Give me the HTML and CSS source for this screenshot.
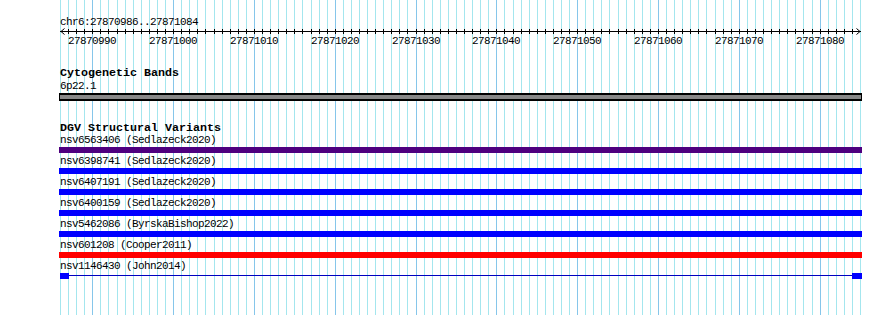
FILE: index.html
```html
<!DOCTYPE html>
<html lang="en">
<head>
<meta charset="utf-8">
<title>Genome browser</title>
<link rel="stylesheet" href="styles.css">
</head>
<body>
<svg class="grid" width="890" height="315" viewBox="0 0 890 315" aria-hidden="true">
  <path class="grid-minor" d="M60.5 0v315M68.5 0v315M76.5 0v315M84.5 0v315M100.5 0v315M108.5 0v315M117.5 0v315M125.5 0v315M133.5 0v315M141.5 0v315M149.5 0v315M157.5 0v315M165.5 0v315M181.5 0v315M189.5 0v315M197.5 0v315M205.5 0v315M214.5 0v315M222.5 0v315M230.5 0v315M238.5 0v315M246.5 0v315M262.5 0v315M270.5 0v315M278.5 0v315M286.5 0v315M294.5 0v315M302.5 0v315M311.5 0v315M319.5 0v315M327.5 0v315M343.5 0v315M351.5 0v315M359.5 0v315M367.5 0v315M375.5 0v315M383.5 0v315M391.5 0v315M399.5 0v315M407.5 0v315M424.5 0v315M432.5 0v315M440.5 0v315M448.5 0v315M456.5 0v315M464.5 0v315M472.5 0v315M480.5 0v315M488.5 0v315M504.5 0v315M513.5 0v315M521.5 0v315M529.5 0v315M537.5 0v315M545.5 0v315M553.5 0v315M561.5 0v315M569.5 0v315M585.5 0v315M593.5 0v315M601.5 0v315M609.5 0v315M618.5 0v315M626.5 0v315M634.5 0v315M642.5 0v315M650.5 0v315M666.5 0v315M674.5 0v315M682.5 0v315M690.5 0v315M698.5 0v315M706.5 0v315M715.5 0v315M723.5 0v315M731.5 0v315M747.5 0v315M755.5 0v315M763.5 0v315M771.5 0v315M779.5 0v315M787.5 0v315M795.5 0v315M803.5 0v315M812.5 0v315M828.5 0v315M836.5 0v315M844.5 0v315M852.5 0v315M860.5 0v315"/>
  <path class="grid-major" d="M92.5 0v315M173.5 0v315M254.5 0v315M335.5 0v315M416.5 0v315M496.5 0v315M577.5 0v315M658.5 0v315M739.5 0v315M820.5 0v315"/>
</svg>

<main class="browser">
  <div class="position">chr6:27870986..27871084</div>

  <svg class="ruler" width="803" height="19" viewBox="59 0 803 19">
    <path class="ruler-line" d="M60 3.5H861"/>
    <path class="ruler-line" d="M64.5 0.5L61 3.5L64.5 6.5M856.5 0.5L860 3.5L856.5 6.5"/>
    <path class="ruler-ticks" d="M68.5 1v5M76.5 1v5M84.5 1v5M92.5 1v5M100.5 1v5M108.5 1v5M117.5 1v5M125.5 1v5M133.5 1v5M141.5 1v5M149.5 1v5M157.5 1v5M165.5 1v5M173.5 1v5M181.5 1v5M189.5 1v5M197.5 1v5M205.5 1v5M214.5 1v5M222.5 1v5M230.5 1v5M238.5 1v5M246.5 1v5M254.5 1v5M262.5 1v5M270.5 1v5M278.5 1v5M286.5 1v5M294.5 1v5M302.5 1v5M311.5 1v5M319.5 1v5M327.5 1v5M335.5 1v5M343.5 1v5M351.5 1v5M359.5 1v5M367.5 1v5M375.5 1v5M383.5 1v5M391.5 1v5M399.5 1v5M407.5 1v5M416.5 1v5M424.5 1v5M432.5 1v5M440.5 1v5M448.5 1v5M456.5 1v5M464.5 1v5M472.5 1v5M480.5 1v5M488.5 1v5M496.5 1v5M504.5 1v5M513.5 1v5M521.5 1v5M529.5 1v5M537.5 1v5M545.5 1v5M553.5 1v5M561.5 1v5M569.5 1v5M577.5 1v5M585.5 1v5M593.5 1v5M601.5 1v5M609.5 1v5M618.5 1v5M626.5 1v5M634.5 1v5M642.5 1v5M650.5 1v5M658.5 1v5M666.5 1v5M674.5 1v5M682.5 1v5M690.5 1v5M698.5 1v5M706.5 1v5M715.5 1v5M723.5 1v5M731.5 1v5M739.5 1v5M747.5 1v5M755.5 1v5M763.5 1v5M771.5 1v5M779.5 1v5M787.5 1v5M795.5 1v5M803.5 1v5M812.5 1v5M820.5 1v5M828.5 1v5M836.5 1v5M844.5 1v5M852.5 1v5"/>
    <g class="ruler-labels">
      <text x="92" y="16">27870990</text>
      <text x="173" y="16">27871000</text>
      <text x="254" y="16">27871010</text>
      <text x="335" y="16">27871020</text>
      <text x="416" y="16">27871030</text>
      <text x="496" y="16">27871040</text>
      <text x="577" y="16">27871050</text>
      <text x="658" y="16">27871060</text>
      <text x="739" y="16">27871070</text>
      <text x="820" y="16">27871080</text>
    </g>
  </svg>

  <section class="track track-cyto">
    <h2 class="track-title">Cytogenetic Bands</h2>
    <div class="feature-label band-label">6p22.1</div>
    <div class="band"></div>
  </section>

  <section class="track track-dgv">
    <h2 class="track-title">DGV Structural Variants</h2>
    <div class="feature">
      <div class="feature-label">nsv6563406 (Sedlazeck2020)</div>
      <div class="bar bar-purple"></div>
    </div>
    <div class="feature">
      <div class="feature-label">nsv6398741 (Sedlazeck2020)</div>
      <div class="bar bar-blue"></div>
    </div>
    <div class="feature">
      <div class="feature-label">nsv6407191 (Sedlazeck2020)</div>
      <div class="bar bar-blue"></div>
    </div>
    <div class="feature">
      <div class="feature-label">nsv6400159 (Sedlazeck2020)</div>
      <div class="bar bar-blue"></div>
    </div>
    <div class="feature">
      <div class="feature-label">nsv5462086 (ByrskaBishop2022)</div>
      <div class="bar bar-blue"></div>
    </div>
    <div class="feature">
      <div class="feature-label">nsv601208 (Cooper2011)</div>
      <div class="bar bar-red"></div>
    </div>
    <div class="feature">
      <div class="feature-label">nsv1146430 (John2014)</div>
      <div class="gapped">
        <div class="block block-left"></div>
        <div class="connector"></div>
        <div class="block block-right"></div>
      </div>
    </div>
  </section>
</main>
</body>
</html>
```

FILE: styles.css
```css
html, body {
  margin: 0;
  padding: 0;
  background: #ffffff;
}

body {
  position: relative;
  width: 890px;
  height: 315px;
  overflow: hidden;
  font-family: "Liberation Mono", "DejaVu Sans Mono", monospace;
  font-size: 11px;
  letter-spacing: -0.6px;
  color: #000000;
}

.grid {
  position: absolute;
  left: 0;
  top: 0;
  z-index: 0;
  shape-rendering: crispEdges;
}

.grid-minor {
  stroke: #a4e6ee;
  stroke-width: 1;
  fill: none;
}

.grid-major {
  stroke: #86c6ea;
  stroke-width: 1;
  fill: none;
}

.browser {
  position: relative;
  z-index: 1;
  margin-left: 59px;
  width: 803px;
  display: flex;
  flex-direction: column;
}

.position {
  margin-top: 17px;
  padding-left: 1px;
  line-height: 11px;
  height: 11px;
  white-space: pre;
}

.ruler {
  display: block;
}

.ruler-line {
  stroke: #000;
  stroke-width: 1;
  fill: none;
}

.ruler-ticks {
  stroke: #000;
  stroke-width: 1;
  fill: none;
  shape-rendering: crispEdges;
}

.ruler-labels text {
  font-family: "Liberation Mono", "DejaVu Sans Mono", monospace;
  font-size: 11px;
  letter-spacing: -0.6px;
  fill: #000;
  text-anchor: middle;
}

.track {
  display: flex;
  flex-direction: column;
  margin-top: 21px;
}

.track-cyto {
  margin-top: 20px;
}

.track-title {
  margin: 0;
  padding-left: 1px;
  font-size: 11.67px;
  letter-spacing: 0;
  font-weight: bold;
  line-height: 12px;
  height: 12px;
  white-space: pre;
}

.feature-label {
  padding-left: 1px;
  line-height: 11px;
  height: 11px;
  white-space: pre;
}

.band-label {
  margin-top: 2px;
}

.band {
  margin-top: 1px;
  height: 4px;
  background: #888888;
  border-top: 2px solid #000;
  border-bottom: 2px solid #000;
  border-left: 1px solid #000;
  border-right: 1px solid #000;
}

.feature {
  display: flex;
  flex-direction: column;
  margin-top: 1px;
  margin-bottom: 2px;
}

.bar {
  margin-top: 1px;
  height: 6px;
}

.bar-purple { background: #4e007f; }
.bar-blue { background: #0000ff; }
.bar-red { background: #ff0000; }

.gapped {
  margin-top: 1px;
  margin-left: 1px;
  height: 6px;
  display: flex;
  align-items: flex-start;
}

.block {
  height: 6px;
  background: #0000ff;
}

.block-left { width: 9px; }
.block-right { width: 10px; }

.connector {
  flex: 1;
  height: 1px;
  margin-top: 2px;
  background: #0000c0;
}
```
